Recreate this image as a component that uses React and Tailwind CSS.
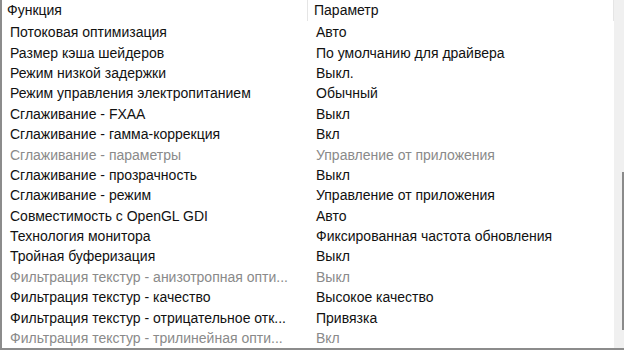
const rows = [
  ["Потоковая оптимизация", "Авто"],
  ["Размер кэша шейдеров", "По умолчанию для драйвера"],
  ["Режим низкой задержки", "Выкл."],
  ["Режим управления электропитанием", "Обычный"],
  ["Сглаживание - FXAA", "Выкл"],
  ["Сглаживание - гамма-коррекция", "Вкл"],
  ["Сглаживание - параметры", "Управление от приложения", true],
  ["Сглаживание - прозрачность", "Выкл"],
  ["Сглаживание - режим", "Управление от приложения"],
  ["Совместимость с OpenGL GDI", "Авто"],
  ["Технология монитора", "Фиксированная частота обновления"],
  ["Тройная буферизация", "Выкл"],
  ["Фильтрация текстур - анизотропная опти...", "Выкл", true],
  ["Фильтрация текстур - качество", "Высокое качество"],
  ["Фильтрация текстур - отрицательное отк...", "Привязка"],
  ["Фильтрация текстур - трилинейная опти...", "Вкл", true],
];

export default function App() {
  return (
    <div className="h-[357px] w-[624px] overflow-hidden bg-white font-['Liberation_Sans',sans-serif] text-[14px] text-[#111]">
      <div className="flex h-[350px] border-b-2 border-l-2 border-[#8c8c8c]">
        <div className="flex min-w-0 flex-1 flex-col">
          <div className="flex h-[21px] items-center">
            <div className="w-[306px] border-r border-[#e5e5e5] pl-[5px] leading-[21px]">Функция</div>
            <div className="w-[306px] border-r border-[#e5e5e5] pl-[6px] leading-[21px]">Параметр</div>
          </div>
          <div className="flex flex-col pt-[1px]">
            {rows.map(([name, value, disabled]) => (
              <div
                key={name}
                className={`flex h-[20.4px] items-center leading-[20px] ${disabled ? "text-[#8a8a8a]" : ""}`}
              >
                <div className="w-[306px] shrink-0 whitespace-nowrap pl-[8px]">{name}</div>
                <div className="whitespace-nowrap pl-[8px]">{value}</div>
              </div>
            ))}
          </div>
        </div>
        <div className="flex w-[10px] justify-end bg-[#f0f0f0] pt-[172px] pb-[18px]">
          <div className="w-[2px] bg-[#8a8a8a]" />
        </div>
      </div>
    </div>
  );
}
